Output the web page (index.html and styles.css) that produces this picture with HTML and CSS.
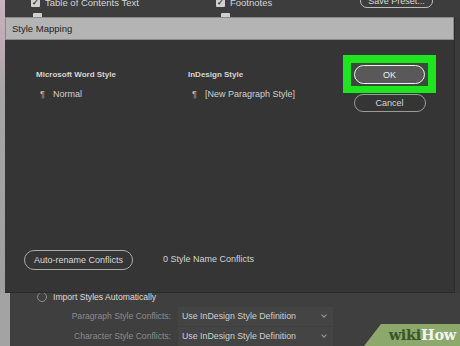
FILE: index.html
```html
<!DOCTYPE html>
<html lang="en">
<head>
    <meta charset="UTF-8">
    <title>Style Mapping</title>
    <link rel="stylesheet" href="styles.css">
</head>
<body>
    <div class="edge"></div>
    <div class="main">
        <div class="behind">
            <div class="behind-row">
                <div class="check-item"><span class="check">&#10003;</span>Table of Contents Text</div>
                <div class="check-item second"><span class="check">&#10003;</span>Footnotes</div>
                <button class="preset">Save Preset...</button>
            </div>
            <div class="behind-row peek">
                <span class="check"></span>
                <span class="check second"></span>
            </div>
        </div>

        <div class="dialog">
            <div class="titlebar">Style Mapping</div>
            <div class="dialog-body">
                <div class="top">
                    <div class="mapping">
                        <div class="col">
                            <div class="col-head">Microsoft Word Style</div>
                            <div class="col-item"><span class="pil">&para;</span>Normal</div>
                        </div>
                        <div class="col">
                            <div class="col-head">InDesign Style</div>
                            <div class="col-item"><span class="pil">&para;</span>[New Paragraph Style]</div>
                        </div>
                    </div>
                    <div class="actions">
                        <div class="highlight">
                            <div class="ok-wrap">
                                <button class="btn ok">OK</button>
                            </div>
                        </div>
                        <button class="btn cancel">Cancel</button>
                    </div>
                </div>
                <div class="footer">
                    <button class="btn rename">Auto-rename Conflicts</button>
                    <span class="conflicts">0 Style Name Conflicts</span>
                </div>
            </div>
        </div>

        <div class="lower">
            <div class="radio-row"><span class="radio"></span>Import Styles Automatically</div>
            <div class="select-row first">
                <span class="label">Paragraph Style Conflicts:</span>
                <div class="select">Use InDesign Style Definition<span class="chev"></span></div>
            </div>
            <div class="select-row">
                <span class="label">Character Style Conflicts:</span>
                <div class="select">Use InDesign Style Definition<span class="chev"></span></div>
            </div>
            <div class="wikihow"><span class="wiki">wiki</span>How</div>
        </div>
    </div>
</body>
</html>
```

FILE: styles.css
```css
* {
    box-sizing: border-box;
}

body {
    margin: 0;
    width: 460px;
    height: 346px;
    overflow: hidden;
    display: flex;
    background: #3b3b3b;
    font-family: "Liberation Sans", Arial, sans-serif;
    font-size: 9px;
    color: #d8d8d8;
}

.edge {
    width: 5px;
    background: linear-gradient(to bottom, #cbb3bd 0, #c2aab4 40px, #a6a6a6 90px, #9d9d9d 100%);
}

.main {
    flex: 1;
    display: flex;
    flex-direction: column;
}

/* window behind the dialog */
.behind {
    flex-shrink: 0;
    height: 17px;
    overflow: hidden;
    background: #3d3d3d;
}

.behind-row {
    display: flex;
    align-items: center;
    height: 13px;
    margin-top: -4px;
    padding-left: 26px;
}

.behind-row.peek {
    margin-top: 2px;
    padding-left: 28px;
}

.check-item {
    display: flex;
    align-items: center;
    width: 185px;
    font-size: 9.5px;
    color: #d6d6d6;
}

.check-item.second {
    width: 144px;
}

.check {
    display: inline-flex;
    align-items: center;
    justify-content: center;
    width: 9px;
    height: 9px;
    margin-right: 5px;
    background: #d0d0d0;
    border-radius: 1px;
    color: #333;
    font-size: 8px;
    font-weight: bold;
}

.peek .check.second {
    margin-left: 174px;
}

.preset {
    height: 14px;
    width: 73px;
    margin-top: -3px;
    border: 1px solid #bdbdbd;
    border-radius: 8px;
    background: transparent;
    color: #d8d8d8;
    font-family: inherit;
    font-size: 9px;
    padding: 0;
}

/* dialog */
.dialog {
    flex-shrink: 0;
    width: 450px;
    height: 276px;
    display: flex;
    flex-direction: column;
    background: #353535;
    border-right: 1px solid #2c2c2c;
    border-bottom: 1px solid #2a2a2a;
}

.titlebar {
    height: 23px;
    display: flex;
    align-items: center;
    padding-left: 6px;
    background: #b4b4b4;
    border: 1px solid #8a8a8a;
    color: #1e1e1e;
    font-size: 9.5px;
}

.dialog-body {
    flex: 1;
    display: flex;
    flex-direction: column;
    padding: 15px 18px 22px 19px;
}

.top {
    flex: 1;
    display: flex;
}

.mapping {
    flex: 1;
    display: flex;
    padding: 15px 0 0 12px;
}

.col {
    width: 152px;
}

.col-head {
    height: 12px;
    font-size: 8px;
    font-weight: bold;
    color: #d6d6d6;
}

.col-item {
    margin-top: 7px;
    padding-left: 4px;
    color: #d0d0d0;
}

.pil {
    display: inline-block;
    width: 10px;
    margin-right: 3px;
    color: #bdbdbd;
}

.actions {
    display: flex;
    flex-direction: column;
    align-items: center;
}

.highlight {
    padding: 8px 8px 7px 8px;
    background: #1ee61e;
}

.ok-wrap {
    padding: 2px 3px;
    background: #3c4a3c;
}

.btn {
    display: block;
    height: 19px;
    padding: 0;
    border: 1px solid #aaa;
    border-radius: 10px;
    background: transparent;
    color: #d8d8d8;
    font-family: inherit;
    font-size: 9px;
}

.ok {
    width: 71px;
    border: 1.5px solid #f0f0f0;
    background: #595959;
    color: #f2f2f2;
}

.cancel {
    width: 72px;
    height: 18px;
    margin-top: 1px;
    border-color: #9a9a9a;
}

.footer {
    display: flex;
    align-items: center;
}

.rename {
    width: 109px;
    height: 20px;
}

.conflicts {
    margin-left: 30px;
    margin-top: -2px;
    color: #d4d4d4;
}

/* panel under the dialog */
.lower {
    position: relative;
    flex: 1;
    min-height: 0;
    overflow: hidden;
    margin-left: -5px;
    border-left: 10px solid #a3a3a3;
    background: #3f3f3f;
    padding-left: 27px;
}

.radio-row {
    display: flex;
    align-items: center;
    height: 10px;
    margin-top: -1px;
    color: #dadada;
    font-size: 8.6px;
}

.radio {
    width: 10px;
    height: 10px;
    margin-right: 6px;
    border: 1px solid #8c8c8c;
    border-radius: 50%;
}

.select-row {
    display: flex;
    align-items: center;
    height: 20px;
}

.select-row.first {
    margin-top: 4px;
}

.label {
    width: 134px;
    text-align: right;
    color: #8c8c8c;
    font-size: 8.6px;
}

.select {
    display: flex;
    align-items: center;
    width: 155px;
    height: 19px;
    margin-left: 7px;
    padding-left: 4px;
    background: #444;
    color: #cfcfcf;
    font-size: 8.8px;
}

.chev {
    width: 4px;
    height: 4px;
    margin-left: auto;
    margin-right: 7px;
    margin-top: -3px;
    border-right: 1px solid #999;
    border-bottom: 1px solid #999;
    transform: rotate(45deg);
}

.wikihow {
    position: absolute;
    right: 0;
    bottom: 0;
    width: 96px;
    height: 22px;
    padding: 2px 4px 0 0;
    text-align: right;
    background: #8ca86c;
    clip-path: polygon(17px 0, 100% 0, 100% 100%, 0 100%);
    font-family: "DejaVu Serif", serif;
    font-size: 14.5px;
    font-weight: bold;
    color: #f4f4f0;
    letter-spacing: -0.3px;
}

.wiki {
    color: #3a5527;
}
```
